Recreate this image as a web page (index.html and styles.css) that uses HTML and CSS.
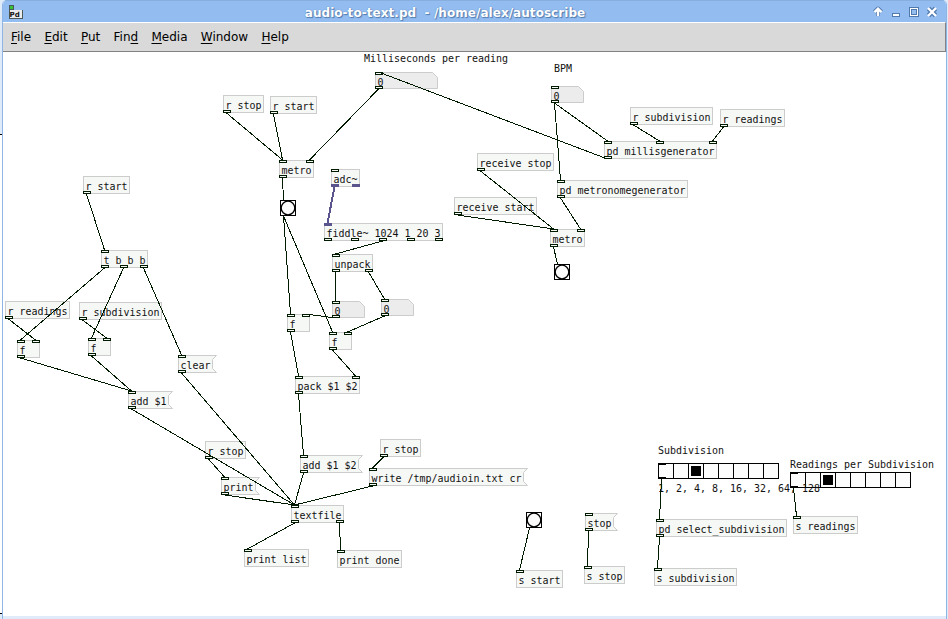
FILE: index.html
```html
<!DOCTYPE html>
<html lang="en">
<head>
<meta charset="utf-8">
<title>audio-to-text.pd</title>
<link rel="stylesheet" href="styles.css">
</head>
<body>
<div class="desktop">
  <div class="edge edge-left"><i class="gap-top"></i><i class="gap-mid"></i><i class="gap-end"></i></div>
  <main class="window">
    <header class="titlebar">
      <svg class="app-icon" width="16" height="16" viewBox="0 0 16 16" shape-rendering="crispEdges">
        <path fill="#4a5a5a" d="M0 1h5v5H0zM0 6h14v9H0z"/>
        <path fill="#35c435" d="M1 2h3v3H1z"/>
        <path fill="#ececec" d="M1 6h12v8H1z"/>
        <text class="app-icon-label" x="0.500" y="12.500">Pd</text>
      </svg>
      <h1 class="title">audio-to-text.pd  - /home/alex/autoscribe</h1>
      <svg class="controls" width="66" height="14" viewBox="0 0 66 14">
        <g stroke="#5079ad" stroke-width="4" fill="none" stroke-linejoin="round">
          <path d="M6 11V4M2.500 7L6 3.500l3.500 3.500"/><path d="M56.500 3.500l7 7M63.500 3.500l-7 7" stroke-width="4.600"/>
        </g>
        <g stroke="#fff" stroke-width="2.400" fill="none">
          <path d="M6 11V4M2.500 7.200L6 3.700l3.500 3.500"/><path d="M56 3l8 8M64 3l-8 8"/>
        </g>
        <g shape-rendering="crispEdges" fill="none">
          <path fill="#5079ad" d="M20 8h8v4h-8z"/><path fill="#fff" d="M21 9h6v2h-6z"/>
          <path fill="#5079ad" d="M37 2h10v10H37z"/><path fill="#fff" d="M38 3h8v8h-8z"/>
          <path fill="#5079ad" d="M39 4h6v6h-6z"/><path fill="#93bcf0" d="M40 5h4v4h-4z"/>
        </g>
      </svg>
    </header>
    <nav class="menubar">
      <span><u>F</u>ile</span><span><u>E</u>dit</span><span><u>P</u>ut</span><span>Fin<u>d</u></span><span><u>M</u>edia</span><span><u>W</u>indow</span><span><u>H</u>elp</span>
    </nav>
    <svg id="patch" class="patch" width="943" height="564" viewBox="3 52 943 564"></svg>
    <div class="bottom-edge"></div>
  </main>
  <div class="edge edge-right"></div>
</div>
<script src="patch.js"></script>
</body>
</html>
```
FILE: styles.css
```css
* { box-sizing: border-box; }
body { margin: 0; background: #dfebf8; overflow: hidden; }
.desktop { display: flex; width: 948px; height: 619px; }
.edge { display: flex; flex-direction: column; background: #dfebf8; }
.edge-left { width: 2px; }
.edge-right { width: 1px; }
.gap-top { height: 134px; }
.gap-mid { height: 480px; background: #fff; border-top: 1px solid #000; border-bottom: 1px solid #000; }
.window {
  display: flex; flex-direction: column; width: 945px; height: 619px;
  border: 0 solid #8fb5e6; border-width: 0 1px; background: #fff;
  border-radius: 5px 5px 0 0; overflow: hidden;
}
.titlebar {
  display: flex; align-items: center; height: 22px; padding: 1px 8px 0 6px;
  background: #93bcf0; border-top: 1px solid #88aede;
}
.app-icon-label { font: bold 7px "DejaVu Sans", sans-serif; fill: #111; }
.title {
  flex: 1; margin: 2px 7px 0 0; text-align: center; white-space: pre; color: #fff;
  font: bold 12px/16px "DejaVu Sans", sans-serif; letter-spacing: 0.05px;
  text-shadow: 0 0 1px #5079ad, 1px 1px 1px #5079ad;
}
.menubar {
  display: flex; align-items: center; gap: 13.300px; height: 30px; padding: 0 0 0 8px;
  background: #d9d9d9; border-top: 1px solid #fff; border-bottom: 1px solid #828282;
  border-right: 1px solid #828282; color: #000;
  font: 12px/16px "DejaVu Sans", sans-serif;
}
.menubar u { text-underline-offset: 2px; text-decoration-skip-ink: none; text-decoration-thickness: 1px; }
.patch { display: block; flex: none; }
.bottom-edge { height: 3px; background: #dfebf8; }
.box { fill: #f6f8f6; stroke: #ccc; }
.num { fill: #ececec; stroke: #ccc; }
.port { fill: #f6f8f6; stroke: #001a00; shape-rendering: crispEdges; }
.port.signal { fill: #5a558c; stroke: #5a558c; }
.cord { stroke: #001a00; shape-rendering: crispEdges; }
.cord.signal { stroke: #5a558c; stroke-width: 2; }
.label { font: 11px "DejaVu Sans Mono", monospace; fill: #111; white-space: pre; }
.iem { fill: #fcfcfc; stroke: #000; shape-rendering: crispEdges; }
.ring { fill: #fcfcfc; stroke: #000; stroke-width: 1.3; }
.mark { fill: #000; shape-rendering: crispEdges; }
```
FILE: patch.js
```js
// kind, x, y, text, inlets, outlets; "~" in the port strings marks a signal port
const nodes = {
  rstop1: ['obj', 223, 95, 'r stop', '', '.'],
  rstart1: ['obj', 270, 96, 'r start', '', '.'],
  metro1: ['obj', 279, 160, 'metro', '..', '.'],
  adc: ['obj', 331, 169, 'adc~', '.', '~~'],
  fiddle: ['obj', 324, 223, 'fiddle~ 1024 1 20 3', '~', '.....'],
  ms: ['num', 375, 72, 10],
  bpm: ['num', 551, 86, 5],
  millis: ['obj', 604, 141, 'pd millisgenerator', '...', '.'],
  rsub1: ['obj', 630, 107, 'r subdivision', '', '.'],
  rread1: ['obj', 720, 109, 'r readings', '', '.'],
  recstop: ['obj', 477, 153, 'receive stop', '', '.'],
  recstart: ['obj', 454, 197, 'receive start', '', '.'],
  metgen: ['obj', 557, 180, 'pd metronomegenerator', '.', '.'],
  metro2: ['obj', 550, 229, 'metro', '..', '.'],
  rstart2: ['obj', 83, 176, 'r start', '', '.'],
  trig: ['obj', 101, 250, 't b b b', '.', '...'],
  rread2: ['obj', 5, 301, 'r readings', '', '.'],
  rsub2: ['obj', 79, 302, 'r subdivision', '', '.'],
  f1: ['obj', 17, 340, 'f', '..', '.'],
  f2: ['obj', 88, 338, 'f', '..', '.'],
  clear: ['msg', 178, 355, 'clear', '.', '.'],
  add1: ['msg', 128, 391, 'add $1', '.', '.'],
  unpack: ['obj', 332, 254, 'unpack', '.', '..'],
  n1: ['num', 332, 301, 5],
  n2: ['num', 381, 299, 5],
  f3: ['obj', 287, 314, 'f', '..', '.'],
  f4: ['obj', 329, 332, 'f', '..', '.'],
  pack: ['obj', 295, 376, 'pack $1 $2', '..', '.'],
  rstop2: ['obj', 205, 441, 'r stop', '', '.'],
  print: ['msg', 221, 477, 'print', '.', '.'],
  add2: ['msg', 300, 455, 'add $1 $2', '.', '.'],
  rstop3: ['obj', 380, 439, 'r stop', '', '.'],
  write: ['msg', 369, 468, 'write /tmp/audioin.txt cr', '.', '.'],
  textfile: ['obj', 291, 505, 'textfile', '.', '..'],
  plist: ['obj', 244, 549, 'print list', '.', ''],
  pdone: ['obj', 337, 550, 'print done', '.', ''],
  sstart: ['obj', 516, 570, 's start', '.', ''],
  stop: ['msg', 585, 513, 'stop', '.', '.'],
  sstop: ['obj', 584, 566, 's stop', '.', ''],
  selsub: ['obj', 656, 519, 'pd select_subdivision', '.', '.'],
  sread: ['obj', 793, 516, 's readings', '.', ''],
  ssub: ['obj', 654, 568, 's subdivision', '.', ''],
  bang1: ['bang', 280, 200],
  bang2: ['bang', 554, 264],
  bang3: ['bang', 526, 512],
  radio1: ['radio', 658, 463],
  radio2: ['radio', 790, 472],
  c1: ['text', 362, 48, 'Milliseconds per reading'],
  c2: ['text', 552, 58, 'BPM'],
  c3: ['text', 656, 440, 'Subdivision'],
  c4: ['text', 656, 478, '1, 2, 4, 8, 16, 32, 64, 128'],
  c5: ['text', 788, 454, 'Readings per Subdivision']
};
// source, outlet, target, inlet
const cords = `rstop1 0 metro1 0|rstart1 0 metro1 0|ms 0 metro1 1|millis 0 ms 0|metro1 0 bang1 0
bang1 0 f3 0|bang1 0 f4 0|adc 0 fiddle 0 ~|fiddle 2 unpack 0|unpack 0 n1 0|unpack 1 n2 0|n1 0 f3 1|n2 0 f4 1
f3 0 pack 0|f4 0 pack 1|pack 0 add2 0|add2 0 textfile 0|clear 0 textfile 0|add1 0 textfile 0|print 0 textfile 0
write 0 textfile 0|rstop2 0 print 0|rstop3 0 write 0|textfile 0 plist 0|textfile 1 pdone 0|rstart2 0 trig 0
trig 0 f1 0|trig 1 f2 0|trig 2 clear 0|rread2 0 f1 1|rsub2 0 f2 1|f1 0 add1 0|f2 0 add1 0|bpm 0 millis 0
bpm 0 metgen 0|rsub1 0 millis 1|rread1 0 millis 2|recstop 0 metro2 0|recstart 0 metro2 0|metgen 0 metro2 1
metro2 0 bang2 0|bang3 0 sstart 0|stop 0 sstop 0|radio1 0 selsub 0|selsub 0 ssub 0|radio2 0 sread 0`;

const boxWidth = n => n[0] === 'num' ? n[3] * 6 + 3 : n[3] ? Math.max(3, n[3].length) * 6 + 5 : 16;
const boxHeight = n => ({ num: 17, bang: 16, radio: 16 })[n[0]] || 18;
const ports = (n, side) => n[0] === 'num' ? '.' : (n[side] || '');
const portX = (n, count, i) => n[1] + (count > 1 ? Math.floor((boxWidth(n) - 8) * i / (count - 1)) : 0);
const label = (x, y, s) => `<text class="label" x="${x + .4}" y="${y}" textLength="${s.length * 6}" lengthAdjust="spacingAndGlyphs">${s}</text>`;

function drawPorts(n) {
  let out = '';
  [4, 5].forEach(side => [...ports(n, side)].forEach((p, i, all) => {
    const y = side === 4 ? n[2] : n[2] + boxHeight(n) - 3;
    out += `<rect class="port${p === '~' ? ' signal' : ''}" x="${portX(n, all.length, i) + .5}" y="${y + .5}" width="7" height="2"/>`;
  }));
  return out;
}

function drawNode(n) {
  const [kind, x, y, s] = n, X = x + .5, Y = y + .5, w = boxWidth(n) - 1, h = boxHeight(n) - 1;
  if (kind === 'text') return label(x + 1.5, y + 14, s);
  if (kind === 'obj') return `<rect class="box" x="${X}" y="${Y}" width="${w}" height="${h}"/>` + label(x + 2, y + 14, s) + drawPorts(n);
  if (kind === 'msg') return `<path class="box" d="M${X} ${Y}h${w + 4}l-4 4v${h - 8}l4 4H${X}z"/>` + label(x + 2, y + 14, s) + drawPorts(n);
  if (kind === 'num') return `<path class="num" d="M${X} ${Y}h${w - 5}l5 5v${h - 5}H${X}z"/>` + label(x + 2, y + 14, '0') + drawPorts(n);
  if (kind === 'bang') return `<rect class="iem" x="${X}" y="${Y}" width="15" height="15"/><circle class="ring" cx="${x + 8}" cy="${y + 8}" r="6.8"/>`;
  let out = '';
  for (let i = 0; i < 8; i++) out += `<rect class="iem" x="${X + i * 15}" y="${Y}" width="15" height="15"/>`;
  return out + `<path class="mark" d="M${x + 33} ${y + 3}h10v10h-10zM${x} ${y}h8v2h-8zM${x} ${y + 14}h8v2h-8z"/>`;
}

function drawCord(line) {
  const [from, o, to, i, signal] = line.trim().split(' ');
  const a = nodes[from], b = nodes[to];
  return `<line class="cord${signal ? ' signal' : ''}" x1="${portX(a, ports(a, 5).length, +o) + 3.5}" y1="${a[2] + boxHeight(a)}" x2="${portX(b, ports(b, 4).length, +i) + 3.5}" y2="${b[2]}"/>`;
}

document.getElementById('patch').innerHTML =
  Object.values(nodes).map(drawNode).join('') + cords.split(/[|\n]/).map(drawCord).join('');
```
